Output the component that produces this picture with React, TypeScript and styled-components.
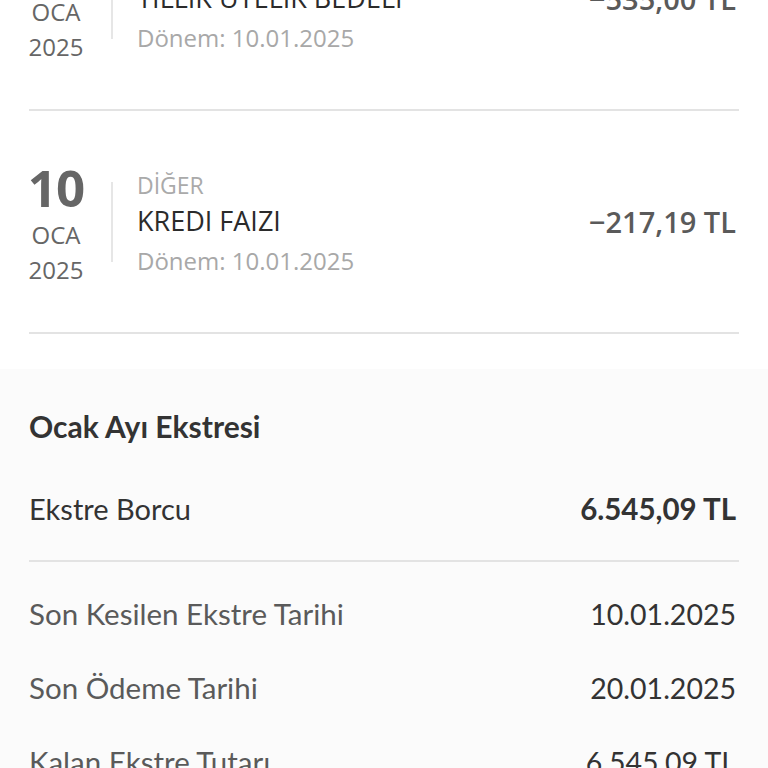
import React from "react";
import styled, { createGlobalStyle } from "styled-components";

const GlobalStyle = createGlobalStyle`
  html, body { margin: 0; padding: 0; background: #ffffff; }
  body { overflow: hidden; }
  * { box-sizing: border-box; }
`;

const Page = styled.div`
  width: 768px;
  height: 768px;
  overflow: hidden;
  background: #ffffff;
`;

const List = styled.div`
  margin-top: -112px;
  padding: 0 29px 35px;
  background: #ffffff;
`;

const Row = styled.div`
  display: flex;
  align-items: center;
  height: 223px;
  border-bottom: 2px solid #e3e3e3;
  font-family: "Open Sans", "Noto Sans", sans-serif;
`;

const DateCol = styled.div`
  width: 54px;
  display: flex;
  flex-direction: column;
  align-items: center;
  color: #666666;
`;

const DayNum = styled.span`
  font-size: 51px;
  font-weight: 700;
  line-height: 60px;
  letter-spacing: -1px;
`;

const DatePart = styled.span`
  font-size: 24px;
  line-height: 35px;
`;

const Divider = styled.div`
  width: 2px;
  height: 80px;
  background: #e6e6e6;
  margin: 0 24px 0 28px;
`;

const Info = styled.div`
  flex: 1;
  display: flex;
  flex-direction: column;
  padding-top: 6px;
`;

const Category = styled.span`
  font-size: 23px;
  line-height: 32px;
  color: #aaaaaa;
`;

const Title = styled.span`
  font-size: 27px;
  line-height: 40px;
  color: #2b2b2b;
`;

const Period = styled.span`
  font-size: 24px;
  line-height: 40px;
  color: #a8a8a8;
`;

const Amount = styled.span`
  margin-right: 3px;
  font-size: 29px;
  font-weight: 600;
  line-height: 40px;
  color: #5a5a5a;
`;

const Statement = styled.section`
  background: #fbfbfb;
  padding: 37px 29px 0;
  font-family: Lato, "Noto Sans", sans-serif;
`;

const Heading = styled.h2`
  margin: 0 0 43px;
  font-size: 30px;
  font-weight: 700;
  line-height: 40px;
  color: #333333;
`;

const DebtRow = styled.div`
  display: flex;
  justify-content: space-between;
  align-items: center;
  padding-bottom: 31px;
  border-bottom: 2px solid #e3e3e3;
  font-size: 29px;
  line-height: 40px;
  color: #333333;
`;

const DebtValue = styled.span`
  margin-right: 3px;
  font-weight: 700;
  font-size: 29.5px;
`;

const Details = styled.div`
  padding-top: 15px;
`;

const DetailRow = styled.div`
  display: flex;
  justify-content: space-between;
  align-items: center;
  padding: 17px 0;
  font-size: 29.5px;
  line-height: 40px;
`;

const DetailLabel = styled.span`
  color: #5a5a5a;
`;

const DetailValue = styled.span`
  margin-right: 3px;
  color: #333333;
  font-size: 28.5px;
`;

type Tx = {
  day: string;
  month: string;
  year: string;
  category: string;
  title: string;
  period: string;
  amount: string;
};

const transactions: Tx[] = [
  {
    day: "10",
    month: "OCA",
    year: "2025",
    category: "DİĞER",
    title: "YILLIK ÜYELİK BEDELİ",
    period: "Dönem: 10.01.2025",
    amount: "−535,00 TL",
  },
  {
    day: "10",
    month: "OCA",
    year: "2025",
    category: "DİĞER",
    title: "KREDI FAIZI",
    period: "Dönem: 10.01.2025",
    amount: "−217,19 TL",
  },
];

const details = [
  { label: "Son Kesilen Ekstre Tarihi", value: "10.01.2025" },
  { label: "Son Ödeme Tarihi", value: "20.01.2025" },
  { label: "Kalan Ekstre Tutarı", value: "6.545,09 TL" },
];

export default function App() {
  return (
    <Page>
      <GlobalStyle />
      <List>
        {transactions.map((t, i) => (
          <Row key={i}>
            <DateCol>
              <DayNum>{t.day}</DayNum>
              <DatePart>{t.month}</DatePart>
              <DatePart>{t.year}</DatePart>
            </DateCol>
            <Divider />
            <Info>
              <Category>{t.category}</Category>
              <Title>{t.title}</Title>
              <Period>{t.period}</Period>
            </Info>
            <Amount>{t.amount}</Amount>
          </Row>
        ))}
      </List>
      <Statement>
        <Heading>Ocak Ayı Ekstresi</Heading>
        <DebtRow>
          <span>Ekstre Borcu</span>
          <DebtValue>6.545,09 TL</DebtValue>
        </DebtRow>
        <Details>
          {details.map((d) => (
            <DetailRow key={d.label}>
              <DetailLabel>{d.label}</DetailLabel>
              <DetailValue>{d.value}</DetailValue>
            </DetailRow>
          ))}
        </Details>
      </Statement>
    </Page>
  );
}
